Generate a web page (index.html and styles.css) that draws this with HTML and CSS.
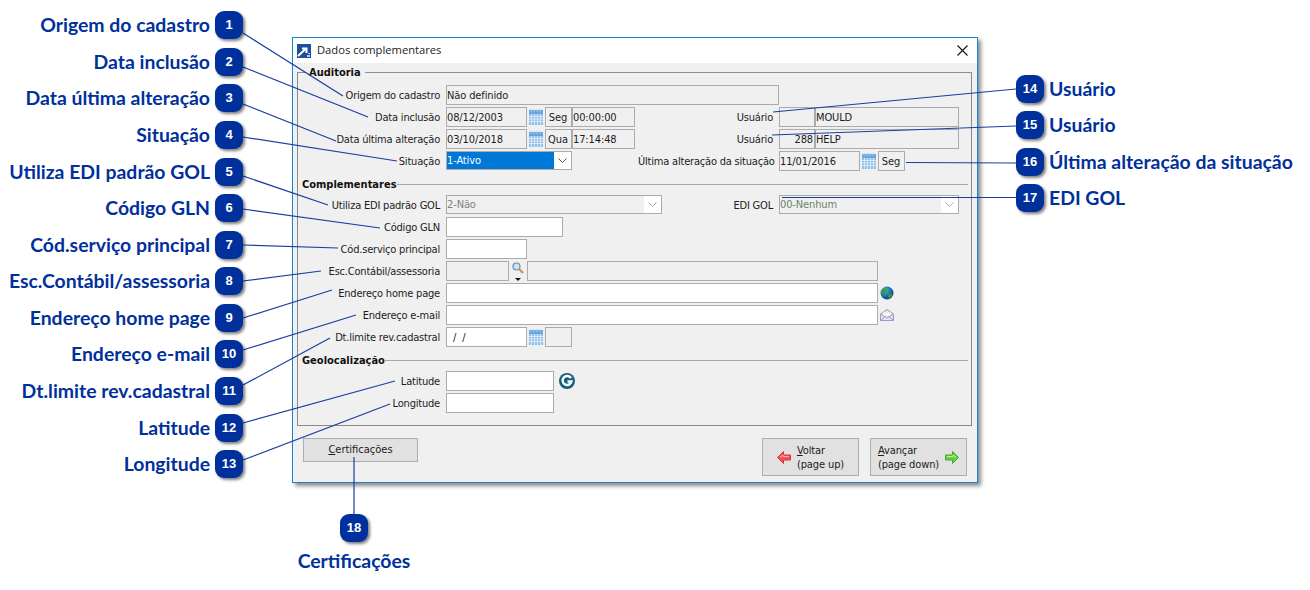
FILE: index.html
```html
<!DOCTYPE html>
<html lang="pt-BR">
<head>
<meta charset="utf-8">
<title>Dados complementares</title>
<link rel="stylesheet" href="styles.css">
</head>
<body>
<svg class="defs" width="0" height="0" aria-hidden="true">
  <symbol id="cal" viewBox="0 0 14 16">
    <rect x="0" y="1" width="14" height="15" fill="#8fc0ea"/>
    <rect x="0" y="1" width="14" height="4" fill="#6aa6dc"/>
    <path d="M2 0v3M5 0v3M8 0v3M11 0v3" stroke="#a8cff0" stroke-width="1"/>
    <path d="M0 7.500h14M0 10h14M0 12.500h14M2.500 5v11M5.500 5v11M8.500 5v11M11.500 5v11" stroke="#d6e8f8" stroke-width="1"/>
  </symbol>
  <symbol id="chev" viewBox="0 0 9 5">
    <path d="M.5.500 4.500 4.500 8.500.500" fill="none" stroke="currentColor" stroke-width="1"/>
  </symbol>
</svg>

<main class="stage">
  <section class="dialog">
    <header class="titlebar">
      <svg class="appicon" viewBox="0 0 14 14">
        <rect width="14" height="14" fill="#1c4f9c"/>
        <path d="M1 12 8 5.500M5 4.500h4.500V9" fill="none" stroke="#fff" stroke-width="2"/>
        <path d="M10 11h3v2h-3zM11 9h2v1h-2z" fill="#b9cbe6"/>
      </svg>
      <span class="title">Dados complementares</span>
      <svg class="close" viewBox="0 0 11 11"><path d="M.5.500 10.500 10.500M10.500.500.500 10.500" stroke="#111" stroke-width="1.100" fill="none"/></svg>
    </header>

    <fieldset class="panel">
      <legend class="legend">Auditoria</legend>

      <div class="row">
        <label class="lbl">Origem do cadastro</label>
        <span class="fld w333">Não definido</span>
      </div>
      <div class="row">
        <label class="lbl">Data inclusão</label>
        <span class="fld w81">08/12/2003</span>
        <svg class="calico"><use href="#cal"/></svg>
        <span class="fld w27 ctr">Seg</span>
        <span class="fld w63">00:00:00</span>
        <div class="rgroup">
          <label class="lbl rlbl">Usuário</label>
          <span class="fld w36"></span><span class="fld w144">MOULD</span>
        </div>
      </div>
      <div class="row">
        <label class="lbl">Data última alteração</label>
        <span class="fld w81">03/10/2018</span>
        <svg class="calico"><use href="#cal"/></svg>
        <span class="fld w27 ctr">Qua</span>
        <span class="fld w63">17:14:48</span>
        <div class="rgroup">
          <label class="lbl rlbl">Usuário</label>
          <span class="fld w36 end">288</span><span class="fld w144">HELP</span>
        </div>
      </div>
      <div class="row">
        <label class="lbl">Situação</label>
        <div class="sel w126">
          <span class="sel-val active">1-Ativo</span>
          <span class="sel-btn"><svg class="chev"><use href="#chev"/></svg></span>
        </div>
        <div class="rgroup">
          <label class="lbl rlbl">Última alteração da situação</label>
          <span class="fld w81">11/01/2016</span>
          <svg class="calico"><use href="#cal"/></svg>
          <span class="fld w27 ctr">Seg</span>
        </div>
      </div>

      <div class="section"><span>Complementares</span></div>

      <div class="row">
        <label class="lbl">Utiliza EDI padrão GOL</label>
        <div class="sel w216 off">
          <span class="sel-val">2-Não</span>
          <span class="sel-btn"><svg class="chev"><use href="#chev"/></svg></span>
        </div>
        <div class="rgroup tight">
          <label class="lbl rlbl">EDI GOL</label>
          <div class="sel w180 off">
            <span class="sel-val green">00-Nenhum</span>
            <span class="sel-btn"><svg class="chev"><use href="#chev"/></svg></span>
          </div>
        </div>
      </div>
      <div class="row">
        <label class="lbl">Código GLN</label>
        <span class="fld on w117"></span>
      </div>
      <div class="row">
        <label class="lbl">Cód.serviço principal</label>
        <span class="fld on w81"></span>
      </div>
      <div class="row">
        <label class="lbl">Esc.Contábil/assessoria</label>
        <span class="fld w63"></span>
        <span class="lookup">
          <svg class="lens" viewBox="0 0 12 12">
            <circle cx="4.500" cy="4.500" r="3.500" fill="#cfe3f2" stroke="#6e8fa8" stroke-width="1.200"/>
            <path d="M7.500 7.500 11 11" stroke="#e08a3c" stroke-width="2.200"/>
          </svg>
          <i class="caret"></i>
        </span>
        <span class="fld w351"></span>
      </div>
      <div class="row">
        <label class="lbl">Endereço home page</label>
        <span class="fld on w432"></span>
        <svg class="sideico" viewBox="0 0 14 14">
          <defs><radialGradient id="gl" cx=".35" cy=".3" r=".8"><stop offset="0" stop-color="#5fb4e8"/><stop offset=".6" stop-color="#14689f"/><stop offset="1" stop-color="#0b3f6b"/></radialGradient></defs>
          <circle cx="7" cy="7" r="6.500" fill="url(#gl)"/>
          <path d="M3 3c2-1 4 0 4 1.500S5 6 4.500 8 2 7 1.500 6 2 3.500 3 3zM9 8c1.500-.5 3 0 3 1s-2 3-3 3-1-3 0-4z" fill="#3f9a3c"/>
        </svg>
      </div>
      <div class="row">
        <label class="lbl">Endereço e-mail</label>
        <span class="fld on w432"></span>
        <svg class="sideico" viewBox="0 0 14 14">
          <path d="M.5 6 7 1.500 13.500 6v6.500H.5z" fill="#e4e2f8" stroke="#9c9ac4"/>
          <path d="M3 4.500h8v3H3z" fill="#fff8e2"/>
          <path d="M.5 6 7 10l6.500-4M.5 12.500 5 8.500M13.500 12.500 9 8.500" fill="none" stroke="#9c9ac4"/>
        </svg>
      </div>
      <div class="row">
        <label class="lbl">Dt.limite rev.cadastral</label>
        <span class="fld on w81 mask">  /  /</span>
        <svg class="calico"><use href="#cal"/></svg>
        <span class="fld w27"></span>
      </div>

      <div class="section"><span>Geolocalização</span></div>

      <div class="row">
        <label class="lbl">Latitude</label>
        <span class="fld on w108"></span>
        <svg class="gico" viewBox="0 0 16 16">
          <circle cx="8" cy="8" r="8" fill="#12607f"/>
          <path d="M12 5.200A4.500 4.500 0 1 0 12.500 8.500H8.500" fill="none" stroke="#fff" stroke-width="2.400"/>
        </svg>
      </div>
      <div class="row">
        <label class="lbl">Longitude</label>
        <span class="fld on w108"></span>
      </div>
    </fieldset>

    <footer class="footer">
      <button class="btn cert" type="button"><u>C</u>ertificações</button>
      <div class="navs">
        <button class="btn nav" type="button">
          <svg class="arrow" viewBox="0 0 14 13"><path d="M.5 6.500 6.500.5v3.500h7v5h-7v3.500z" fill="#f4505a" stroke="#d8343c"/><path d="M3 6.500 6 4v1.500h6" fill="none" stroke="#ffa8ac"/></svg>
          <span class="navtxt"><span><u>V</u>oltar</span><span>(page up)</span></span>
        </button>
        <button class="btn nav" type="button">
          <span class="navtxt"><span><u>A</u>vançar</span><span>(page down)</span></span>
          <svg class="arrow" viewBox="0 0 14 13"><path d="M13.500 6.500 7.500.5v3.500h-7v5h7v3.500z" fill="#66d040" stroke="#44a82e"/><path d="M2 5.500h6V4l3 2.500" fill="none" stroke="#bcf2a4"/></svg>
        </button>
      </div>
    </footer>
  </section>

  <svg class="leaders" viewBox="0 0 1310 590">
    <path d="M243 33 343 96M243 67 368 117M243 104 336 141M243 137 397 161M243 176 328 205M243 209 380 228M243 245 338 248M243 281 321 271M243 318 332 290M243 350 356 315M243 385 330 338M243 423 395 381M243 460 390 404M1016 89 773 112M1016 126 772 135M1016 163 906 162.500M1016 197.500 782 197.500M354 514V457"/>
  </svg>

  <ol class="callouts left">
    <li><span class="cap">Origem do cadastro</span><b class="badge">1</b></li>
    <li><span class="cap">Data inclusão</span><b class="badge">2</b></li>
    <li><span class="cap">Data última alteração</span><b class="badge">3</b></li>
    <li><span class="cap">Situação</span><b class="badge">4</b></li>
    <li><span class="cap">Utiliza EDI padrão GOL</span><b class="badge">5</b></li>
    <li><span class="cap">Código GLN</span><b class="badge">6</b></li>
    <li><span class="cap">Cód.serviço principal</span><b class="badge">7</b></li>
    <li><span class="cap">Esc.Contábil/assessoria</span><b class="badge">8</b></li>
    <li><span class="cap">Endereço home page</span><b class="badge">9</b></li>
    <li><span class="cap">Endereço e-mail</span><b class="badge">10</b></li>
    <li><span class="cap">Dt.limite rev.cadastral</span><b class="badge">11</b></li>
    <li><span class="cap">Latitude</span><b class="badge">12</b></li>
    <li><span class="cap">Longitude</span><b class="badge">13</b></li>
  </ol>

  <ol class="callouts right">
    <li><b class="badge">14</b><span class="cap">Usuário</span></li>
    <li><b class="badge">15</b><span class="cap">Usuário</span></li>
    <li><b class="badge">16</b><span class="cap">Última alteração da situação</span></li>
    <li><b class="badge">17</b><span class="cap">EDI GOL</span></li>
  </ol>

  <div class="callout-bottom">
    <b class="badge">18</b>
    <span class="cap">Certificações</span>
  </div>
</main>
</body>
</html>
```
FILE: styles.css
```css
* { box-sizing: border-box; }
html, body { margin: 0; padding: 0; background: #fff; overflow: hidden; }
.defs { position: absolute; }
.stage { position: relative; width: 1310px; height: 590px; overflow: hidden; }

/* dialog */
.dialog {
  position: absolute; left: 292px; top: 37px; width: 686px; height: 446px;
  border: 1px solid #1a82d4; background: #f0f0f0;
  box-shadow: 3px 3px 4px rgba(0,0,0,.45);
  font: 11px/14px "DejaVu Sans", sans-serif; font-stretch: condensed; color: #1c1c1c;
  display: flex; flex-direction: column;
}
.titlebar { height: 25px; background: #fff; display: flex; align-items: center; padding: 0 9px 0 4px; flex: none; }
.appicon { width: 14px; height: 14px; margin-right: 6px; }
.title { font: 11.200px/16px "Open Sans", sans-serif; color: #222; padding-bottom: 2px; }
.close { width: 11px; height: 11px; margin-left: auto; }

.panel {
  margin: 1px 5px 0 4px; padding: 5px 12px 10px 0; min-width: 0;
  border: 1px solid #8a8a8a; border-top-color: #8f8f8f; flex: none;
}
.legend { margin-left: 7px; padding: 0 4px; height: 16px; font-weight: 700; font-size: 11px; line-height: 18px; color: #111; }

.row { display: flex; height: 20px; margin-bottom: 2px; align-items: flex-start; }
.lbl { width: 142px; margin-right: 6px; text-align: right; line-height: 21px; letter-spacing: -.2px; white-space: nowrap; flex: none; }
.rgroup { margin-left: auto; display: flex; width: 321px; align-items: flex-start; }
.rgroup.tight { width: 297px; }
.rlbl { width: 135px; }
.tight .rlbl { width: 111px; }

.fld {
  height: 20px; border: 1px solid #ababab; background: #f0f0f0; padding: 0 1px 0 0;
  line-height: 20px; letter-spacing: -.12px; white-space: pre; flex: none; display: block;
}
.fld.on { background: #fff; }
.ctr { text-align: center; }
.end { text-align: right; }
.w27 { width: 27px; } .w36 { width: 36px; } .w63 { width: 63px; } .w81 { width: 81px; }
.w108 { width: 108px; } .w117 { width: 117px; } .w144 { width: 144px; }
.w333 { width: 333px; } .w351 { width: 351px; } .w432 { width: 432px; }
.w126 { width: 126px; } .w180 { width: 180px; } .w216 { width: 216px; }

.calico { width: 14px; height: 16px; margin: 2px 2px 0; flex: none; }
.sideico { width: 14px; height: 14px; margin: 3px 0 0 2px; flex: none; }
.gico { width: 16px; height: 16px; margin: 2px 0 0 5px; flex: none; }

.sel { height: 19px; border: 1px solid #ababab; background: #f0f0f0; display: flex; flex: none; }
.sel-val { flex: 1; line-height: 18px; letter-spacing: -.12px; }
.sel-val.active { background: #0078d7; color: #fff; }
.sel-btn { width: 17px; background: #fff; display: flex; align-items: center; justify-content: center; color: #555; flex: none; }
.chev { width: 9px; height: 5px; }
.off .sel-val { color: #808080; }
.off .sel-val.green { color: #6f8270; }
.off .chev { color: #a8a8a8; }

.lookup { width: 18px; height: 20px; display: flex; flex-direction: column; align-items: center; flex: none; }
.lens { width: 12px; height: 12px; margin-top: 1px; }
.caret { display: block; margin-top: 4px; border: 3px solid transparent; border-top: 3px solid #111; border-bottom: 0; }

.section {
  height: 22px; margin: 0 -9px 0 4px; display: flex; align-items: center; font-weight: 700; color: #111;
}
.section span { padding-top: 2px; }
.section::after { content: ""; flex: 1; height: 1px; background: #a6a6a6; }

.footer { display: flex; justify-content: space-between; align-items: flex-start; padding: 12px 10px 0; }
.navs { display: flex; gap: 11px; }
.btn {
  font: inherit; color: #1c1c1c; background: #e1e1e1; border: 1px solid #adadad; padding: 0; margin: 0;
}
.cert { width: 115px; height: 24px; }
.nav { width: 97px; height: 38px; display: flex; align-items: center; justify-content: center; gap: 6px; text-align: left; }
.navtxt { display: flex; flex-direction: column; padding-top: 2px; letter-spacing: -.1px; }
.arrow { width: 14px; height: 13px; flex: none; }

/* annotation layer */
.leaders { position: absolute; left: 0; top: 0; width: 1310px; height: 590px; pointer-events: none; }
.leaders path { fill: none; stroke: #1a3fa0; stroke-width: 1.200; }

.callouts { position: absolute; margin: 0; padding: 0; list-style: none; display: grid; grid-auto-rows: 36.58px; }
.callouts li { display: flex; align-items: center; gap: 5px; white-space: nowrap; }
.callouts.left { left: 0; top: 7px; width: 243px; }
.callouts.left li { justify-content: flex-end; }
.callouts.right { left: 1016px; top: 70.300px; }
.callout-bottom { position: absolute; left: 254px; top: 514px; width: 200px; display: flex; flex-direction: column; align-items: center; gap: 6px; }

.cap { font: 700 19.400px/26px Lato, sans-serif; color: #00309c; }
.badge {
  width: 28px; height: 28px; border-radius: 9px; background: #00309c; color: #fff;
  font: 700 13px/28px "Liberation Sans", sans-serif; text-align: center; flex: none;
  box-shadow: 2px 2px 3px rgba(0,0,0,.5);
}
```
